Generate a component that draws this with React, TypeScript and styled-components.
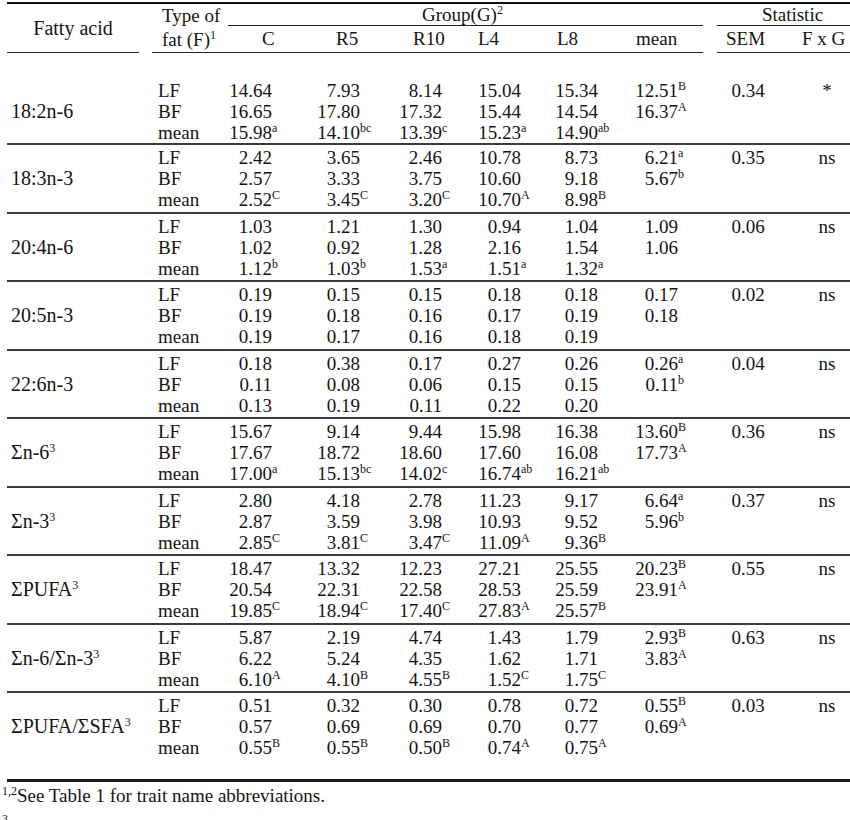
import React from "react";
import styled, { createGlobalStyle } from "styled-components";

const Global = createGlobalStyle`
  html, body { margin: 0; padding: 0; background: #fff; overflow: hidden; }
  body { font-family: "Liberation Serif", "Times New Roman", serif; color: #141414; }
`;

const COLS = "139px 81px 53px 88px 82px 79px 77px 104px 76px 82px";

const Page = styled.div`
  width: 850px;
  height: 820px;
  overflow: hidden;
  padding-top: 2px;
  box-sizing: border-box;
`;

const Table = styled.div`
  margin-left: 7px;
  width: 861px;
  font-size: 19px;
`;

const Head = styled.div`
  display: grid;
  grid-template-columns: ${COLS};
  grid-template-rows: 22px auto;
  border-top: 2.5px solid #111;
`;

const HFatty = styled.div`
  grid-column: 1;
  grid-row: 1 / span 2;
  margin-right: 7px;
  border-bottom: 1.5px solid #222;
  display: flex;
  align-items: center;
  justify-content: center;
  font-size: 20px;
`;

const HType = styled.div`
  grid-column: 2;
  grid-row: 1 / span 2;
  margin-left: 6px;
  padding-left: 10px;
  line-height: 24px;
  border-bottom: 1.5px solid #222;
  white-space: nowrap;
`;

const HGroup = styled.div`
  grid-column: 3 / span 6;
  grid-row: 1;
  margin-left: 1px;
  margin-right: 7px;
  padding-left: 194px;
  border-bottom: 1px solid #222;
  text-align: left;
  line-height: 21px;
  white-space: nowrap;
`;

const HStat = styled.div`
  grid-column: 9 / span 2;
  grid-row: 1;
  margin-left: 7px;
  border-bottom: 1px solid #222;
  text-align: center;
  line-height: 21px;
`;

const HCol = styled.div<{ $ml?: number; $mr?: number; $pl: number }>`
  grid-row: 2;
  padding-top: 3px;
  line-height: 19px;
  margin-left: ${(p) => p.$ml ?? 0}px;
  margin-right: ${(p) => p.$mr ?? 0}px;
  padding-left: ${(p) => p.$pl}px;
  border-bottom: 1.5px solid #222;
  text-align: left;
  white-space: nowrap;
`;

const Sup = styled.sup`
  font-size: 12px;
  line-height: 0;
  vertical-align: 7px;
`;

const Group = styled.div<{ $pt: number; $pb: number; $last?: boolean }>`
  display: grid;
  grid-template-columns: ${COLS};
  grid-auto-rows: 21px;
  line-height: 21px;
  padding-top: ${(p) => p.$pt}px;
  padding-bottom: ${(p) => p.$pb}px;
  border-bottom: ${(p) => (p.$last ? "3px solid #1a1a1a" : "2px solid #3c3c3c")};
`;

const Name = styled.div`
  grid-column: 1;
  grid-row: 1 / span 3;
  align-self: center;
  padding-left: 4px;
  font-size: 20px;
  white-space: nowrap;
`;

const TypeCell = styled.div`
  grid-column: 2;
  padding-left: 12px;
`;

const NumCell = styled.div<{ $pr: number }>`
  text-align: right;
  padding-right: ${(p) => p.$pr}px;
  white-space: nowrap;
`;

const StatCell = styled.div`
  text-align: center;
`;

const Mark = styled.span`
  display: inline-block;
  width: 0;
  text-align: left;
  font-size: 12px;
  line-height: 1;
  vertical-align: 7px;
  white-space: nowrap;
`;

const Notes = styled.div`
  margin-top: 3px;
  padding-left: 2px;
  font-size: 19px;
  line-height: 22px;
`;

const NoteLine = styled.div<{ $pt?: number }>`
  padding-top: ${(p) => p.$pt ?? 0}px;
`;

const NoteSup = styled.sup`
  font-size: 12px;
  line-height: 0;
  vertical-align: 7px;
`;

type GroupData = {
  name: React.ReactNode;
  lf: string[];
  bf: string[];
  mean: string[];
  sem: string;
  fxg: string;
};

const S3 = <Sup>3</Sup>;

const groups: GroupData[] = [
  {
    name: "18:2n-6",
    lf: ["14.64", "7.93", "8.14", "15.04", "15.34", "12.51^B"],
    bf: ["16.65", "17.80", "17.32", "15.44", "14.54", "16.37^A"],
    mean: ["15.98^a", "14.10^bc", "13.39^c", "15.23^a", "14.90^ab", ""],
    sem: "0.34",
    fxg: "*",
  },
  {
    name: "18:3n-3",
    lf: ["2.42", "3.65", "2.46", "10.78", "8.73", "6.21^a"],
    bf: ["2.57", "3.33", "3.75", "10.60", "9.18", "5.67^b"],
    mean: ["2.52^C", "3.45^C", "3.20^C", "10.70^A", "8.98^B", ""],
    sem: "0.35",
    fxg: "ns",
  },
  {
    name: "20:4n-6",
    lf: ["1.03", "1.21", "1.30", "0.94", "1.04", "1.09"],
    bf: ["1.02", "0.92", "1.28", "2.16", "1.54", "1.06"],
    mean: ["1.12^b", "1.03^b", "1.53^a", "1.51^a", "1.32^a", ""],
    sem: "0.06",
    fxg: "ns",
  },
  {
    name: "20:5n-3",
    lf: ["0.19", "0.15", "0.15", "0.18", "0.18", "0.17"],
    bf: ["0.19", "0.18", "0.16", "0.17", "0.19", "0.18"],
    mean: ["0.19", "0.17", "0.16", "0.18", "0.19", ""],
    sem: "0.02",
    fxg: "ns",
  },
  {
    name: "22:6n-3",
    lf: ["0.18", "0.38", "0.17", "0.27", "0.26", "0.26^a"],
    bf: ["0.11", "0.08", "0.06", "0.15", "0.15", "0.11^b"],
    mean: ["0.13", "0.19", "0.11", "0.22", "0.20", ""],
    sem: "0.04",
    fxg: "ns",
  },
  {
    name: <>Σn-6{S3}</>,
    lf: ["15.67", "9.14", "9.44", "15.98", "16.38", "13.60^B"],
    bf: ["17.67", "18.72", "18.60", "17.60", "16.08", "17.73^A"],
    mean: ["17.00^a", "15.13^bc", "14.02^c", "16.74^ab", "16.21^ab", ""],
    sem: "0.36",
    fxg: "ns",
  },
  {
    name: <>Σn-3{S3}</>,
    lf: ["2.80", "4.18", "2.78", "11.23", "9.17", "6.64^a"],
    bf: ["2.87", "3.59", "3.98", "10.93", "9.52", "5.96^b"],
    mean: ["2.85^C", "3.81^C", "3.47^C", "11.09^A", "9.36^B", ""],
    sem: "0.37",
    fxg: "ns",
  },
  {
    name: <>ΣPUFA{S3}</>,
    lf: ["18.47", "13.32", "12.23", "27.21", "25.55", "20.23^B"],
    bf: ["20.54", "22.31", "22.58", "28.53", "25.59", "23.91^A"],
    mean: ["19.85^C", "18.94^C", "17.40^C", "27.83^A", "25.57^B", ""],
    sem: "0.55",
    fxg: "ns",
  },
  {
    name: <>Σn-6/Σn-3{S3}</>,
    lf: ["5.87", "2.19", "4.74", "1.43", "1.79", "2.93^B"],
    bf: ["6.22", "5.24", "4.35", "1.62", "1.71", "3.83^A"],
    mean: ["6.10^A", "4.10^B", "4.55^B", "1.52^C", "1.75^C", ""],
    sem: "0.63",
    fxg: "ns",
  },
  {
    name: <>ΣPUFA/ΣSFA{S3}</>,
    lf: ["0.51", "0.32", "0.30", "0.78", "0.72", "0.55^B"],
    bf: ["0.57", "0.69", "0.69", "0.70", "0.77", "0.69^A"],
    mean: ["0.55^B", "0.55^B", "0.50^B", "0.74^A", "0.75^A", ""],
    sem: "0.03",
    fxg: "ns",
  },
];

const PAD = [8, 8, 8, 8, 8, 32];

const Value: React.FC<{ v: string }> = ({ v }) => {
  const [num, mark] = v.split("^");
  return (
    <>
      {num}
      {mark ? <Mark>{mark}</Mark> : null}
    </>
  );
};

const Row: React.FC<{ label: string; values: string[]; sem?: string; fxg?: string }> = ({
  label,
  values,
  sem,
  fxg,
}) => (
  <>
    <TypeCell>{label}</TypeCell>
    {values.map((v, i) => (
      <NumCell key={i} $pr={PAD[i]}>
        <Value v={v} />
      </NumCell>
    ))}
    <StatCell>{sem ?? ""}</StatCell>
    <StatCell>{fxg ?? ""}</StatCell>
  </>
);

export default function App() {
  return (
    <Page>
      <Global />
      <Table>
        <Head>
          <HFatty>Fatty acid</HFatty>
          <HType>
            Type of
            <br />
            fat (F)<Sup>1</Sup>
          </HType>
          <HGroup>
            Group(G)<Sup>2</Sup>
          </HGroup>
          <HStat>Statistic</HStat>
          <HCol $pl={35}>C</HCol>
          <HCol $pl={56}>R5</HCol>
          <HCol $pl={45}>R10</HCol>
          <HCol $pl={28}>L4</HCol>
          <HCol $pl={28}>L8</HCol>
          <HCol $mr={7} $pl={30}>mean</HCol>
          <HCol $ml={7} $pl={9}>SEM</HCol>
          <HCol $pl={16}>F x G</HCol>
        </Head>
        {groups.map((g, i) => {
          const first = i === 0;
          const last = i === groups.length - 1;
          return (
            <Group key={i} $pt={first ? 27 : 2} $pb={last ? 21 : first ? 0 : 1.5} $last={last}>
              <Name>{g.name}</Name>
              <Row label="LF" values={g.lf} sem={g.sem} fxg={g.fxg} />
              <Row label="BF" values={g.bf} />
              <Row label="mean" values={g.mean} />
            </Group>
          );
        })}
      </Table>
      <Notes>
        <NoteLine>
          <NoteSup>1,2</NoteSup>See Table 1 for trait name abbreviations.
        </NoteLine>
        <NoteLine $pt={6}>
          <NoteSup>3</NoteSup>
        </NoteLine>
      </Notes>
    </Page>
  );
}
